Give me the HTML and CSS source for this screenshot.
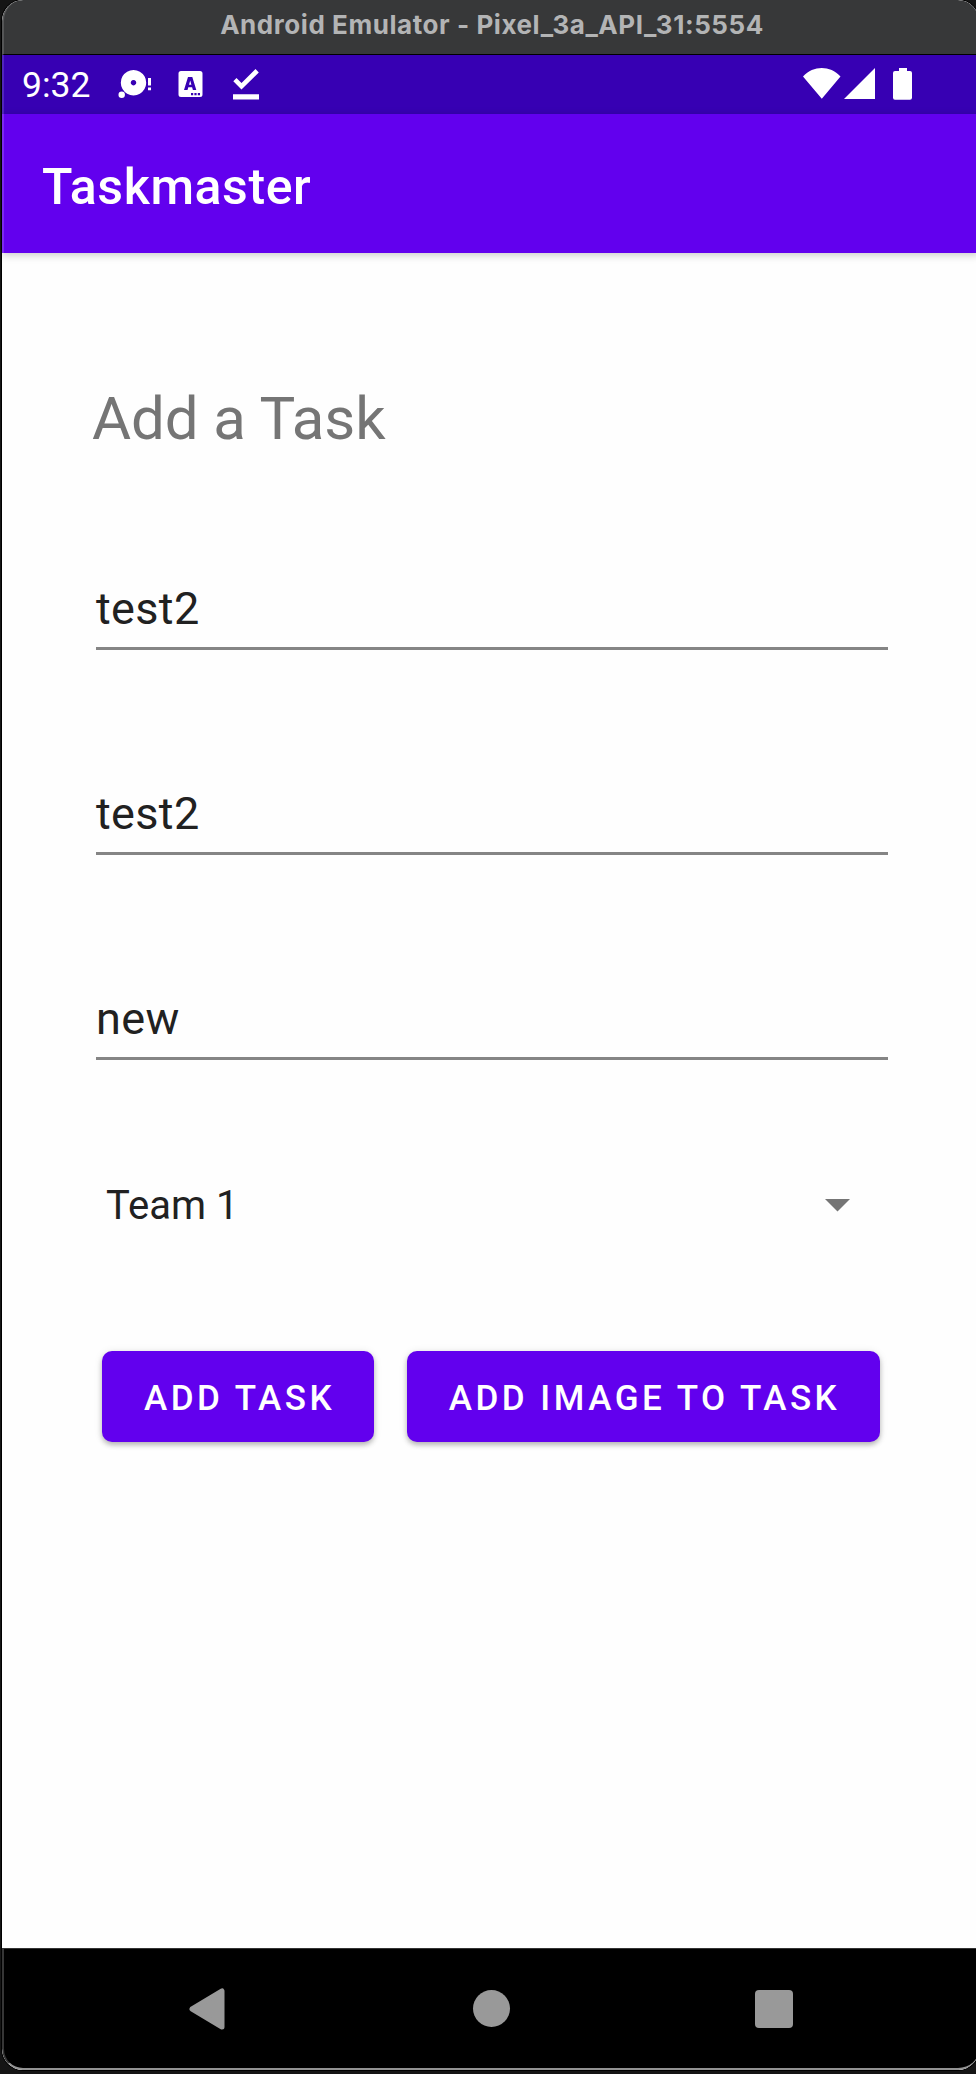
FILE: index.html
```html
<!DOCTYPE html>
<html lang="en">
<head>
<meta charset="utf-8">
<title>Android Emulator</title>
<link rel="stylesheet" href="styles.css">
</head>
<body>
<div class="window">
  <header class="titlebar"><span class="titlebar-text">Android Emulator - Pixel_3a_API_31:5554</span></header>
  <div class="statusbar">
    <span class="clock">9:32</span>
    <svg class="notices" width="144" height="37" viewBox="116 66 144 37" fill="#fff">
      <path fill-rule="evenodd" d="M133.500 70a12.700 12.700 0 1 0 .01 0zM133.500 80a2.700 2.700 0 1 1-.01 0z"/>
      <circle cx="121.700" cy="94.700" r="3.200"/>
      <path d="M148 78h3v7.500h-3zM148 87.500h3v2.700h-3z"/>
      <path fill-rule="evenodd" d="M181 71h19a2.500 2.500 0 0 1 2.500 2.500v21a2.500 2.500 0 0 1-2.500 2.500h-19a2.500 2.500 0 0 1-2.500-2.500v-21a2.500 2.500 0 0 1 2.500-2.500zM188 77l-4 13h3.500l.8-2.700h3.800l.8 2.700h3.400l-4-13zM190.200 80.500l1.200 4.200h-2.400zM191 93v2.200h2.200v-2.200zM194.400 93v2.200h2.200v-2.200zM197.800 93v2.200h2.200v-2.200z"/>
      <path d="M233.300 81.300l3.200-3.200 5 5 14-14 3.300 3.300-17.300 17.200zM233 94.300h26v5.200h-26z"/>
    </svg>
    <svg class="signals" width="110" height="35" viewBox="803 67 110 35" fill="#fff">
      <path d="M803 76.500C813.500 65.200 830 65.200 840.500 76.500L821.800 98.800zM875 68v31h-31zM899 68h8v3h3a2 2 0 0 1 2 2v24.800a2 2 0 0 1-2 2h-15a2 2 0 0 1-2-2V73a2 2 0 0 1 2-2h4z"/>
    </svg>
  </div>
  <div class="appbar"><h1 class="app-title">Taskmaster</h1></div>
  <main class="screen">
    <h2 class="heading">Add a Task</h2>
    <div class="fields">
      <div class="field">test2</div>
      <div class="field">test2</div>
      <div class="field">new</div>
    </div>
    <div class="spinner">
      <span>Team 1</span>
      <svg width="25" height="13" viewBox="0 0 25 13"><path d="M0 0h25L12.500 12.500z" fill="#757575"/></svg>
    </div>
    <div class="actions">
      <button class="btn btn-add">ADD TASK</button>
      <button class="btn btn-image">ADD IMAGE TO TASK</button>
    </div>
  </main>
  <nav class="navbar">
    <svg width="36" height="42" viewBox="0 0 36 42"><path d="M3 21L33 3v36z" fill="#999" stroke="#999" stroke-width="5" stroke-linejoin="round"/></svg>
    <span class="home"></span>
    <span class="recents"></span>
  </nav>
</div>
</body>
</html>
```
FILE: styles.css
```css
* { box-sizing: border-box; }
body {
  margin: 0;
  width: 976px;
  height: 2074px;
  overflow: hidden;
  background: #151515;
  font-family: Roboto, sans-serif;
}
.window {
  display: flex;
  flex-direction: column;
  width: 977px;
  height: 2070px;
  margin-left: 2px;
  border-radius: 21px;
  overflow: hidden;
  background: #fefefe;
  box-shadow: 0 0 0 1px #000;
}
.titlebar {
  height: 55px;
  flex: none;
  display: flex;
  justify-content: center;
  background: #373839;
  border-bottom: 1px solid #000;
  border-left: 2px solid #555657;
  border-radius: 21px 21px 0 0;
}
.titlebar-text {
  font: 700 26px/49px Inter, sans-serif;
  letter-spacing: .56px;
  padding-left: 1px;
  color: #b3b4b5;
  white-space: nowrap;
}
.statusbar {
  height: 59px;
  flex: none;
  display: flex;
  align-items: center;
  padding-left: 20px;
  padding-right: 66px;
  background: #3700b3;
  box-shadow: inset 2px 0 #5126be;
}
.clock {
  width: 94px;
  font-size: 35.500px;
  line-height: 42px;
  color: #fff;
}
.signals { margin-left: auto; }
.appbar {
  height: 139px;
  flex: none;
  padding: 38px 0 0 40px;
  background: #6200ee;
  box-shadow: inset 2px 0 #7c2af1, 0 2px 8px rgba(0, 0, 0, .22);
}
.app-title {
  margin: 0;
  font-weight: 500;
  font-size: 50px;
  line-height: 70px;
  letter-spacing: .6px;
  color: #fff;
}
.screen {
  flex: 1;
  padding: 131px 0 0 90px;
}
.heading {
  margin: 0;
  font-weight: 400;
  font-size: 60px;
  line-height: 70px;
  letter-spacing: -.1px;
  color: #757575;
}
.fields {
  display: grid;
  gap: 125px;
  margin: 116px 0 0 4px;
  width: 792px;
}
.field {
  height: 80px;
  border-bottom: 3px solid #858585;
  font-size: 45px;
  line-height: 78px;
  letter-spacing: .35px;
  color: #212121;
}
.spinner {
  display: flex;
  align-items: center;
  justify-content: space-between;
  height: 60px;
  margin: 115px 0 0 14px;
  width: 744px;
  font-size: 40px;
  line-height: 60px;
  color: #212121;
}
.spinner span { padding-top: 2px; }
.actions {
  display: flex;
  gap: 32.500px;
  margin: 116px 0 0 10px;
}
.btn {
  height: 91px;
  border: 0;
  padding: 4px 0 0 3px;
  border-radius: 10px;
  background: #6200ee;
  color: #fff;
  font: 500 35px/88px Roboto, sans-serif;
  letter-spacing: 3.500px;
  text-align: center;
  box-shadow: 0 3px 5px rgba(0, 0, 0, .24), 0 1px 8px rgba(0, 0, 0, .1);
}
.btn-add { width: 272px; }
.btn-image { width: 473px; }
.navbar {
  height: 122px;
  flex: none;
  display: flex;
  align-items: center;
  padding-left: 185px;
  background: #000;
  border-top: 1px solid #333;
  border-bottom: 2px solid #929292;
  border-left: 2px solid #363636;
  border-radius: 0 0 21px 21px;
}
.home {
  width: 37px;
  height: 37px;
  margin-left: 248px;
  border-radius: 50%;
  background: #999;
}
.recents {
  width: 38px;
  height: 38px;
  margin-left: 245px;
  border-radius: 4px;
  background: #999;
}
```
